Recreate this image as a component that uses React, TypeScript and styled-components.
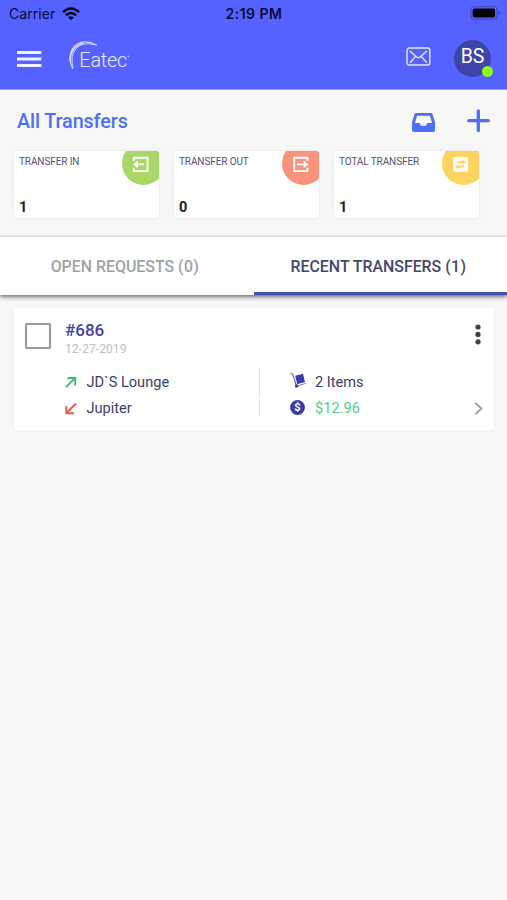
import React from 'react';
import styled, { createGlobalStyle } from 'styled-components';

const GlobalStyle = createGlobalStyle`
  * { box-sizing: border-box; }
  body { margin: 0; background: #f7f7f8; font-family: Roboto, "Liberation Sans", sans-serif; }
  button { border: 0; padding: 0; margin: 0; background: none; font: inherit; color: inherit; }
  svg { display: block; flex: none; }
`;

const Screen = styled.main`
  width: 507px;
  height: 900px;
  overflow: hidden;
  background: #f7f7f8;
`;

const Header = styled.header`
  height: 90px;
  background: #5662ff;
  border-bottom: 1px solid #929cff;
`;

const StatusBar = styled.div`
  display: grid;
  grid-template-columns: 1fr 1fr 1fr;
  align-items: center;
  height: 27px;
  padding: 0 6px 0 9px;
  font-family: Inter, sans-serif;
  font-size: 14px;
  line-height: 27px;
  color: #0a0b35;
`;

const Carrier = styled.div`
  display: flex;
  align-items: center;
  gap: 7px;
  letter-spacing: 0.05px;
`;

const Clock = styled.div`
  padding-right: 2px;
  text-align: center;
  font-weight: 600;
  letter-spacing: 0.5px;
`;

const Battery = styled.div`
  display: flex;
  justify-content: flex-end;
  margin-top: -1px;
`;

const NavBar = styled.nav`
  display: flex;
  align-items: center;
  height: 62px;
  padding: 0 16px 0 17px;
`;

const MenuToggle = styled.button`
  margin-top: 2px;
`;

const Brand = styled.div`
  display: flex;
  margin: -2px 0 0 26px;
`;

const NavActions = styled.div`
  display: flex;
  align-items: center;
  gap: 23px;
  margin-left: auto;
`;

const MailButton = styled.button`
  margin-top: -2px;
`;

const Avatar = styled.div`
  position: relative;
  width: 37px;
  height: 37px;
  border-radius: 50%;
  background: #3f45a8;
  color: #fff;
  font-size: 19.5px;
  line-height: 33px;
  text-align: center;
`;

const OnlineDot = styled.span`
  position: absolute;
  right: -2px;
  bottom: 0;
  width: 11px;
  height: 11px;
  border-radius: 50%;
  background: #8dfb0a;
`;

const TitleRow = styled.div`
  display: flex;
  align-items: center;
  height: 61px;
  padding: 0 17px;
`;

const Title = styled.h1`
  margin: 2px 0 0;
  font-size: 19.8px;
  font-weight: 500;
  line-height: 24px;
  letter-spacing: -0.1px;
  color: #4e6ff5;
`;

const TitleActions = styled.div`
  display: flex;
  align-items: flex-start;
  gap: 32px;
  margin: -1px 0 0 auto;
`;

const InboxButton = styled.button`
  margin-top: 4px;
`;

const Summary = styled.section`
  display: flex;
  gap: 15px;
  height: 86px;
  padding: 0 14px;
  border-bottom: 2px solid #ebebec;
`;

const StatCard = styled.article`
  display: flex;
  flex-direction: column;
  justify-content: space-between;
  position: relative;
  width: 145px;
  height: 67px;
  padding: 4px 5px 2px;
  overflow: hidden;
  background: #fff;
  border-radius: 2px;
  box-shadow: 0 0 3px rgba(0, 0, 0, 0.1);
`;

const StatName = styled.span`
  font-size: 10px;
  line-height: 13px;
  letter-spacing: -0.1px;
  color: #52526f;
`;

const StatValue = styled.strong`
  font-size: 14.5px;
  line-height: 17px;
  font-weight: 700;
  color: #202020;
`;

const StatBadge = styled.span<{ $color: string }>`
  position: absolute;
  top: -9px;
  right: -6px;
  width: 43px;
  height: 43px;
  padding: 14px 0 0 10px;
  border-radius: 50%;
  background: ${({ $color }) => $color};
`;

const Tabs = styled.div`
  display: grid;
  grid-template-columns: 254px 253px;
  position: relative;
  height: 58px;
  background: #fff;
  box-shadow: 0 2px 4px rgba(0, 0, 0, 0.55);
`;

const Tab = styled.button<{ $active?: boolean }>`
  height: 58px;
  padding: 2px 4px 0 0;
  font-size: 15.9px;
  font-weight: 500;
  line-height: 53px;
  color: ${({ $active }) => ($active ? '#44486b' : '#a0a1a9')};
  border-bottom: 3px solid ${({ $active }) => ($active ? '#4050ac' : 'transparent')};
  padding-top: 3px;
`;

const Count = styled.span`
  letter-spacing: 0.4px;
`;

const TransferCard = styled.article`
  display: grid;
  grid-template-columns: 51px 1fr 21px;
  grid-template-rows: 60px 27px 27px;
  width: 480px;
  height: 122px;
  margin: 13px 0 0 14px;
  background: #fff;
  box-shadow: 0 0 2px rgba(0, 0, 0, 0.06);
`;

const Checkbox = styled.span`
  width: 26px;
  height: 26px;
  margin: 15px 0 0 11px;
  border: 2px solid #999;
  border-radius: 2px;
`;

const Heading = styled.div`
  padding-top: 12px;
`;

const Number = styled.div`
  font-size: 17px;
  font-weight: 500;
  line-height: 20px;
  color: #3f41a8;
`;

const DateText = styled.div`
  margin-top: 2px;
  font-size: 12.2px;
  line-height: 15px;
  color: #c0c0c4;
`;

const MenuButton = styled.button`
  display: flex;
  padding: 16px 0 0 2px;
`;

const DetailRow = styled.div`
  display: grid;
  grid-column: 2 / 4;
  grid-template-columns: 21.5px 172.5px 31px 25px 1fr 20px;
  align-items: center;
  font-size: 14.6px;
  line-height: 27px;
  color: #3d3d67;
`;

const Divider = styled.i<{ $last?: boolean }>`
  align-self: start;
  width: 1px;
  height: ${({ $last }) => ($last ? '18px' : '29px')};
  margin-top: ${({ $last }) => ($last ? '4px' : '0')};
  background: #e3e3e7;
`;

const CartSlot = styled.span`
  padding-bottom: 5px;
`;

const CoinSlot = styled.span`
  padding-bottom: 2px;
`;

const Amount = styled.span`
  color: #54cd8c;
`;

const WifiIcon = () => (
  <svg width="18" height="14" viewBox="0 0 18 14" fill="none" stroke="#02021c" strokeWidth="2.5">
    <path d="M1 5.1Q9-2 17 5.1M4 8.3Q9 3.8 14 8.3" />
    <path d="M6.2 10.5Q9 8 11.8 10.5L9 13.3Z" fill="#02021c" stroke="none" />
  </svg>
);

const BatteryIcon = () => (
  <svg width="31" height="14" viewBox="0 0 31 14">
    <rect x=".75" y=".75" width="26.5" height="12.5" rx="3.5" fill="none" stroke="#4047b9" strokeWidth="1.2" />
    <rect x="2.7" y="2.5" width="22.3" height="9" rx="2" fill="#020208" />
    <path d="M28.6 5Q31 7 28.6 9Z" fill="#3b42ae" />
  </svg>
);

const MenuIcon = () => (
  <svg width="25" height="18" viewBox="0 0 25 18" fill="#f1f2ff">
    <path d="M0 1h24.3v3H0zM0 7.5h24.3v3H0zM0 14h24.3v3H0z" />
  </svg>
);

const BrandLogo = () => (
  <svg width="64" height="34" viewBox="0 0 64 34">
    <g fill="none" strokeLinecap="round">
      <path d="M4.6 28.5C-1 17 3 5.8 12.5 2.5Q20 .4 28.5 5.2" stroke="#d5d9ff" strokeWidth="1.3" />
      <path d="M5 27C2 17 5.5 7.7 14.5 4.3Q20 2.6 26 4.6" stroke="#cdd1ff" strokeWidth="1" />
      <path d="M2.2 20C2.2 11 8 5 15 3.5" stroke="#d5d9ff" strokeWidth="1.5" />
    </g>
    <text x="11.3" y="27.3" fontFamily="Roboto, sans-serif" fontWeight="300" fontSize="19.8" textLength="48" fill="#e9ebff">Eatec</text>
    <circle cx="60.3" cy="16.4" r=".9" fill="#b6bdff" />
  </svg>
);

const MailIcon = () => (
  <svg width="25" height="20" viewBox="0 0 25 20" fill="none" stroke="#e5e7ff" strokeWidth="1.4">
    <rect x="1" y="1" width="22.8" height="17" rx="2.2" />
    <path d="M3.8 4l7 6q1.6 1.4 3.2 0l7-6M4 15.7l5.7-6.5M20.8 15.7l-5.7-6.5" />
  </svg>
);

const InboxIcon = () => (
  <svg width="23" height="19" viewBox="0 0 23 19">
    <path fillRule="evenodd" fill="#4e6ff5" d="M4 0H19Q20 0 20.5 1L23 9.5V17.2Q23 19 21.2 19H1.8Q0 19 0 17.2V9.5L2.5 1Q3 0 4 0ZM5.1 2.7L3 10H7.5L9 12.8H14L15.5 10H20L17.9 2.7Z" />
  </svg>
);

const PlusIcon = () => (
  <svg width="23" height="23" viewBox="0 0 23 23" stroke="#4e6ff5" strokeWidth="3.3" strokeLinecap="round">
    <path d="M11.3 2v19.5M1.8 11.7h19.5" />
  </svg>
);

type Direction = 'in' | 'out' | 'total';

const BadgeIcon = ({ kind }: { kind: Direction }) => (
  <svg width="17" height="17" viewBox="0 0 17 17" fill="none" stroke="#fff" strokeWidth="1.9">
    {kind === 'in' && (
      <>
        <path d="M1.8 5V1.7H15.5V15.1H1.8V11.8M4 8.4H12" />
        <path d="M1 8.4L5.8 4.6V12.2Z" fill="#fff" stroke="none" />
      </>
    )}
    {kind === 'out' && (
      <>
        <path d="M15.5 5V1.7H2.2V15.1H15.5V11.8M5 8.4H13" />
        <path d="M16.4 8.4L11.6 4.6V12.2Z" fill="#fff" stroke="none" />
      </>
    )}
    {kind === 'total' && (
      <>
        <rect x="1.2" y="1" width="15" height="14.8" rx="2" fill="#fff" stroke="none" />
        <path d="M4.8 6.3H13.2M4 10.7H12.2" stroke="#fcce57" strokeWidth="1.7" />
        <path d="M10.2 3.6L14 7H10.2ZM6.9 13.5L3.2 10H6.9Z" fill="#fcce57" stroke="none" />
      </>
    )}
  </svg>
);

const ArrowIcon = ({ down = false }: { down?: boolean }) => (
  <svg width="12" height="12" viewBox="0 0 12 12" fill="none" stroke={down ? '#e75843' : '#39bd79'} strokeWidth="1.9">
    <path d={down ? 'M11 .5L1.5 10M1.3 2.9V10.3H9' : 'M1 10.2L10 1.2M2.5 1H10.2V8.5'} />
  </svg>
);

const CartIcon = () => (
  <svg width="17" height="17" viewBox="0 0 17 17" fill="#3c3ea7">
    <path d="M.6 1.3L2.8 2.3L6.2 13" fill="none" stroke="#5a5cb5" strokeWidth="1.1" />
    <path d="M5.2 3.8L13 1.7L15 10L7.2 12.3Z" />
    <path d="M8 13.9L15.8 11.3" stroke="#6365bb" strokeWidth=".9" />
    <circle cx="6.6" cy="14" r="1.8" />
  </svg>
);

const CoinIcon = () => (
  <svg width="15" height="15" viewBox="0 0 15 15">
    <circle cx="7.5" cy="7.5" r="7.4" fill="#393ba5" />
    <text x="7.5" y="11.4" fontFamily="Roboto, sans-serif" fontWeight="700" fontSize="11" textAnchor="middle" fill="#fff">$</text>
  </svg>
);

const DotsIcon = () => (
  <svg width="6" height="21" viewBox="0 0 6 21" fill="#404040">
    <circle cx="3" cy="3" r="2.6" />
    <circle cx="3" cy="10.4" r="2.6" />
    <circle cx="3" cy="17.8" r="2.6" />
  </svg>
);

const ChevronIcon = () => (
  <svg width="9" height="13" viewBox="0 0 9 13" fill="none" stroke="#999" strokeWidth="1.7">
    <path d="M1.3 .8L7.5 6.5L1.3 12.2" />
  </svg>
);

const stats: { name: string; value: number; color: string; kind: Direction }[] = [
  { name: 'TRANSFER IN', value: 1, color: '#a9d76a', kind: 'in' },
  { name: 'TRANSFER OUT', value: 0, color: '#f9937b', kind: 'out' },
  { name: 'TOTAL TRANSFER', value: 1, color: '#fdd362', kind: 'total' },
];

export default function App() {
  return (
    <Screen>
      <GlobalStyle />
      <Header>
        <StatusBar>
          <Carrier>Carrier <WifiIcon /></Carrier>
          <Clock>2:19 PM</Clock>
          <Battery><BatteryIcon /></Battery>
        </StatusBar>
        <NavBar>
          <MenuToggle aria-label="Menu"><MenuIcon /></MenuToggle>
          <Brand><BrandLogo /></Brand>
          <NavActions>
            <MailButton aria-label="Messages"><MailIcon /></MailButton>
            <Avatar>BS<OnlineDot /></Avatar>
          </NavActions>
        </NavBar>
      </Header>
      <TitleRow>
        <Title>All Transfers</Title>
        <TitleActions>
          <InboxButton aria-label="Inbox"><InboxIcon /></InboxButton>
          <button aria-label="Add transfer"><PlusIcon /></button>
        </TitleActions>
      </TitleRow>
      <Summary>
        {stats.map(({ name, value, color, kind }) => (
          <StatCard key={name}>
            <StatName>{name}</StatName>
            <StatValue>{value}</StatValue>
            <StatBadge $color={color}><BadgeIcon kind={kind} /></StatBadge>
          </StatCard>
        ))}
      </Summary>
      <Tabs>
        <Tab>OPEN REQUESTS <Count>(0)</Count></Tab>
        <Tab $active>RECENT TRANSFERS <Count>(1)</Count></Tab>
      </Tabs>
      <TransferCard>
        <Checkbox />
        <Heading>
          <Number>#686</Number>
          <DateText>12-27-2019</DateText>
        </Heading>
        <MenuButton aria-label="More"><DotsIcon /></MenuButton>
        <DetailRow>
          <ArrowIcon /><span>JD`S Lounge</span><Divider /><CartSlot><CartIcon /></CartSlot><span>2 Items</span>
        </DetailRow>
        <DetailRow>
          <ArrowIcon down /><span>Jupiter</span><Divider $last /><CoinSlot><CoinIcon /></CoinSlot><Amount>$12.96</Amount><ChevronIcon />
        </DetailRow>
      </TransferCard>
    </Screen>
  );
}
